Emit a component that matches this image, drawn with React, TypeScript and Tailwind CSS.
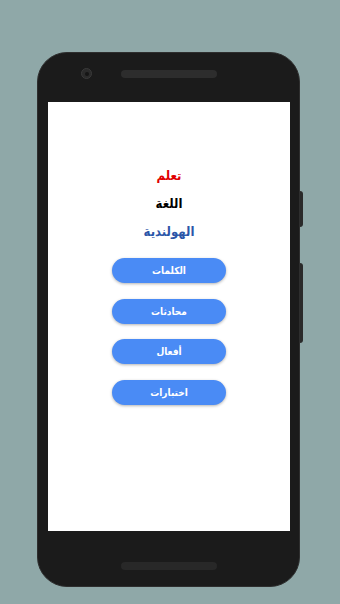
export default function App() {
  const buttons = ["الكلمات", "محادثات", "أفعال", "اختبارات"];

  return (
    <div className="w-[340px] h-[604px] bg-[#8fa8a8] pt-[52px] overflow-hidden">
      <div className="relative ml-[37px] w-[263px] h-[535px] rounded-[30px] bg-[#1b1b1b] border border-[#2e2e2e] pt-[49px] pl-[10px]">
        {/* camera + speakers */}
        <div className="absolute left-[43px] top-[15px] w-[11px] h-[11px] rounded-full bg-[#2a2a2a] border border-[#3a3a3a] flex items-center justify-center">
          <div className="w-[4px] h-[4px] rounded-full bg-[#151515]" />
        </div>
        <div className="absolute left-[83px] top-[17px] w-[96px] h-[8px] rounded-full bg-[#2d2d2d]" />
        <div className="absolute left-[83px] bottom-[16px] w-[96px] h-[8px] rounded-full bg-[#282828]" />

        {/* side buttons */}
        <div className="absolute right-[-4px] top-[138px] w-[3px] h-[36px] rounded-r-sm bg-[#2a2a2a]" />
        <div className="absolute right-[-4px] top-[210px] w-[3px] h-[80px] rounded-r-sm bg-[#2a2a2a]" />

        {/* screen */}
        <div
          dir="rtl"
          className="w-[242px] h-[429px] bg-white flex flex-col items-center pt-[60px] font-['DejaVu_Sans_Condensed','DejaVu_Sans',sans-serif] font-bold"
        >
          <div className="h-[28px] leading-[28px] text-[13px] text-[#e00000]">تعلم</div>
          <div className="h-[28px] leading-[28px] text-[13px] text-black">اللغة</div>
          <div className="h-[28px] leading-[28px] text-[13px] text-[#2c56a8]">الهولندية</div>

          <div className="mt-[12px] flex flex-col gap-[15.5px]">
            {buttons.map((label) => (
              <button
                key={label}
                className="w-[114px] h-[25px] rounded-full bg-[#4a8bf5] text-white text-[10px] font-bold shadow-[0_1px_3px_rgba(0,0,0,0.3)]"
              >
                {label}
              </button>
            ))}
          </div>
        </div>
      </div>
    </div>
  );
}
